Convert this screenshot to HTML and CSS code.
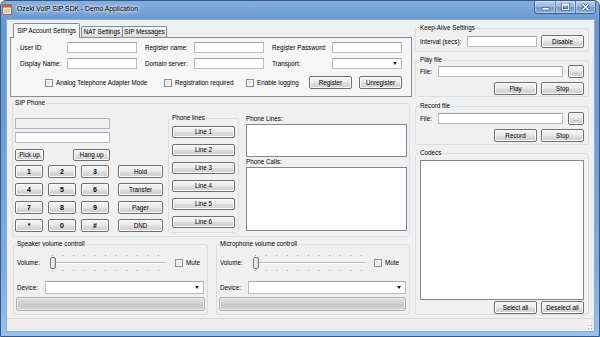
FILE: index.html
```html
<!DOCTYPE html>
<html lang="en">
<head>
  <meta charset="UTF-8" />
  <meta name="viewport" content="width=device-width, initial-scale=1.0"/>
  <title>Ozeki VoIP SIP SDK - Demo Application</title>
  <link rel="stylesheet" href="styles.css">
</head>

<body>
  <div class="window">
    <!-- Title bar -->
    <div class="titlebar">
      <svg class="app-icon" width="10" height="11" viewBox="0 0 10 11">
        <rect x="0.5" y="0.5" width="9" height="10" fill="#efe6d2" stroke="#8b7b5e"/>
        <rect x="1" y="1" width="8" height="2.5" fill="#c95b3c"/>
        <rect x="2" y="5" width="6" height="4" fill="#d9cdb2"/>
      </svg>
      <span class="title">Ozeki VoIP SIP SDK - Demo Application</span>
      <div class="caption-buttons">
        <span class="cap">
          <svg width="9" height="8" viewBox="0 0 9 8"><rect x="1" y="4.5" width="7" height="2.5" fill="#fff" stroke="#2c4a70" stroke-width="0.6"/></svg>
        </span>
        <span class="cap">
          <svg width="9" height="8" viewBox="0 0 9 8"><rect x="1.3" y="1" width="6.4" height="5.6" fill="none" stroke="#2c4a70" stroke-width="2.2"/><rect x="1.3" y="1" width="6.4" height="5.6" fill="none" stroke="#fff" stroke-width="1.1"/><rect x="1.3" y="0.8" width="6.4" height="1.6" fill="#fff"/></svg>
        </span>
        <span class="cap close">
          <svg width="9" height="8" viewBox="0 0 9 8"><path d="M1.5 1 L7.5 7 M7.5 1 L1.5 7" stroke="#2c4a70" stroke-width="2.6"/><path d="M1.5 1 L7.5 7 M7.5 1 L1.5 7" stroke="#fff" stroke-width="1.5"/></svg>
        </span>
      </div>
    </div>

    <div class="client">
      <div class="main">
        <div class="left-col">
          <!-- Account tabs -->
          <div class="tabs">
            <span class="tab active">SIP Account Settings</span>
            <span class="tab tab-nat">NAT Settings</span>
            <span class="tab tab-msg">SIP Messages</span>
          </div>
          <div class="tab-panel">
            <div class="account-grid">
              <label>User ID:</label>
              <input type="text" class="text">
              <label class="pad">Register name:</label>
              <input type="text" class="text">
              <label class="pad">Register Password:</label>
              <input type="text" class="text">

              <label>Display Name:</label>
              <input type="text" class="text">
              <label class="pad">Domain server:</label>
              <input type="text" class="text">
              <label class="pad">Transport:</label>
              <div class="combo"><span class="arrow"></span></div>
            </div>
            <div class="account-options">
              <label class="check-item w-analog"><input type="checkbox" class="check">Analog Telephone Adapter Mode</label>
              <label class="check-item w-reg"><input type="checkbox" class="check">Registration required</label>
              <label class="check-item w-log"><input type="checkbox" class="check">Enable logging</label>
              <button class="btn w43">Register</button>
              <button class="btn w43">Unregister</button>
            </div>
          </div>

          <!-- SIP Phone -->
          <fieldset class="group phone">
            <legend>SIP Phone</legend>
            <div class="phone-body">
              <div class="dialer">
                <div class="display"></div>
                <input type="text" class="text dial-input">
                <div class="call-row">
                  <button class="btn pick">Pick up</button>
                  <button class="btn hang">Hang up</button>
                </div>
                <div class="pad-row">
                  <div class="keypad">
                    <button class="btn key">1</button>
                    <button class="btn key">2</button>
                    <button class="btn key">3</button>
                    <button class="btn key">4</button>
                    <button class="btn key">5</button>
                    <button class="btn key">6</button>
                    <button class="btn key">7</button>
                    <button class="btn key">8</button>
                    <button class="btn key">9</button>
                    <button class="btn key">*</button>
                    <button class="btn key">0</button>
                    <button class="btn key">#</button>
                  </div>
                  <div class="func-keys">
                    <button class="btn">Hold</button>
                    <button class="btn">Transfer</button>
                    <button class="btn">Pager</button>
                    <button class="btn">DND</button>
                  </div>
                </div>
              </div>

              <fieldset class="group lines">
                <legend>Phone lines</legend>
                <button class="btn">Line 1</button>
                <button class="btn">Line 2</button>
                <button class="btn">Line 3</button>
                <button class="btn">Line 4</button>
                <button class="btn">Line 5</button>
                <button class="btn">Line 6</button>
              </fieldset>

              <div class="calls">
                <div class="caption">Phone Lines:</div>
                <div class="listbox lines-list"></div>
                <div class="caption">Phone Calls:</div>
                <div class="listbox calls-list"></div>
              </div>
            </div>
          </fieldset>

          <!-- Volume controls -->
          <div class="volume-row">
            <fieldset class="group volume speaker">
              <legend>Speaker volume controll</legend>
              <div class="vol-line">
                <span class="vol-label">Volume:</span>
                <div class="slider"><span class="thumb"></span></div>
                <label class="mute"><input type="checkbox" class="check">Mute</label>
              </div>
              <div class="dev-line">
                <span class="vol-label">Device:</span>
                <div class="combo"><span class="arrow"></span></div>
              </div>
              <div class="progress"></div>
            </fieldset>
            <fieldset class="group volume mic">
              <legend>Microphone volume controll</legend>
              <div class="vol-line">
                <span class="vol-label">Volume:</span>
                <div class="slider"><span class="thumb"></span></div>
                <label class="mute"><input type="checkbox" class="check">Mute</label>
              </div>
              <div class="dev-line">
                <span class="vol-label">Device:</span>
                <div class="combo"><span class="arrow"></span></div>
              </div>
              <div class="progress"></div>
            </fieldset>
          </div>
        </div>

        <div class="right-col">
          <fieldset class="group keepalive">
            <legend>Keep-Alive Settings</legend>
            <div class="row">
              <span class="lbl-interval">Interval (secs):</span>
              <input type="text" class="text w70">
              <button class="btn w43">Disable</button>
            </div>
          </fieldset>

          <fieldset class="group play">
            <legend>Play file</legend>
            <div class="row file-row">
              <span class="lbl-file">File:</span>
              <input type="text" class="text file-input">
              <button class="btn browse">...</button>
            </div>
            <div class="row btn-row">
              <button class="btn w43">Play</button>
              <button class="btn w43">Stop</button>
            </div>
          </fieldset>

          <fieldset class="group record">
            <legend>Record file</legend>
            <div class="row file-row">
              <span class="lbl-file">File:</span>
              <input type="text" class="text file-input">
              <button class="btn browse">...</button>
            </div>
            <div class="row btn-row">
              <button class="btn w43">Record</button>
              <button class="btn w43">Stop</button>
            </div>
          </fieldset>

          <fieldset class="group codecs">
            <legend>Codecs</legend>
            <div class="listbox codec-list"></div>
            <div class="row btn-row">
              <button class="btn w43">Select all</button>
              <button class="btn w43">Deselect all</button>
            </div>
          </fieldset>
        </div>
      </div>

      <div class="statusbar"><span class="grip"></span></div>
    </div>
  </div>
</body>
</html>
```

FILE: styles.css
```css
* {
  margin: 0;
  padding: 0;
  box-sizing: border-box;
}

html, body {
  width: 600px;
  height: 337px;
  overflow: hidden;
  background: #fff;
  font-family: "Liberation Sans", Arial, sans-serif;
  font-size: 6.3px;
  color: #000;
}

/* Window frame */
.window {
  width: 600px;
  height: 337px;
  display: flex;
  flex-direction: column;
  border: 1px solid #34598a;
  border-radius: 6px 6px 0 0;
  background: linear-gradient(180deg, #86b0df 0%, #6896cf 6%, #6e9ed6 40%, #7eacdf 80%, #98c2ec 100%);
}

.titlebar {
  height: 19px;
  display: flex;
  align-items: flex-start;
}

.app-icon {
  margin: 3px 0 0 1px;
}

.title {
  margin: 3px 0 0 5px;
  font-size: 6.8px;
  line-height: 9px;
  color: #000;
  text-shadow: 0 0 3px #fff, 0 0 4px #fff, 0 0 5px #e9f2fb;
}

.caption-buttons {
  margin-left: auto;
  margin-right: 3px;
  display: flex;
  height: 13px;
  border: 1px solid #3b5f8e;
  border-top: none;
  border-radius: 0 0 4px 4px;
  overflow: hidden;
}

.cap {
  width: 20px;
  display: flex;
  align-items: center;
  justify-content: center;
  background: linear-gradient(180deg, #b9d1ec 0%, #96b6de 48%, #7699c8 52%, #8fb2dc 100%);
  border-left: 1px solid #5d80ad;
  box-shadow: inset 0 0 0 1px rgba(255, 255, 255, 0.35);
}

.cap:first-child {
  border-left: none;
}

.client {
  flex: 1;
  margin: 0 5px 5px 6px;
  background: #f0f0f0;
  box-shadow: 0 0 0 1px #8fadd4;
  display: flex;
  flex-direction: column;
}

.main {
  flex: 1;
  display: flex;
  gap: 3px;
  padding: 3px 5px 3px 3px;
}

.left-col {
  width: 402px;
  display: flex;
  flex-direction: column;
}

.right-col {
  width: 174px;
  display: flex;
  flex-direction: column;
}

/* Common controls */
label, .caption, .vol-label, .lbl-interval, .lbl-file {
  line-height: 8px;
  white-space: nowrap;
}

.text {
  height: 11px;
  border: 1px solid #b7bcc4;
  border-top-color: #a2a6ae;
  background: #fff;
  font: inherit;
  outline: none;
}

.btn {
  height: 13px;
  border: 1px solid #707070;
  border-radius: 2px;
  background: linear-gradient(180deg, #f3f3f3 0%, #ebebeb 48%, #dddddd 52%, #cfcfcf 100%);
  box-shadow: inset 0 0 0 1px #fbfbfb;
  font: inherit;
  color: #000;
  line-height: 10px;
  text-align: center;
  white-space: nowrap;
}

.w43 {
  width: 43px;
}

.w70 {
  width: 70px;
}

.check {
  appearance: none;
  width: 8px;
  height: 8px;
  border: 1px solid #8e8f8f;
  background: linear-gradient(135deg, #d9d9d9, #fafafa);
  box-shadow: inset 0 0 0 1px #f4f4f4;
  flex-shrink: 0;
}

.combo {
  height: 12px;
  border: 1px solid #b7bcc4;
  border-top-color: #a2a6ae;
  background: #fff;
  display: flex;
  align-items: center;
  justify-content: flex-end;
  padding-right: 4px;
}

.arrow {
  width: 0;
  height: 0;
  border-left: 2.5px solid transparent;
  border-right: 2.5px solid transparent;
  border-top: 3px solid #111;
}

.listbox {
  border: 1px solid #828790;
  background: #fff;
}

/* Group boxes */
.group {
  border: 1px solid #d5dfe5;
  border-radius: 3px;
  min-width: 0;
}

.group legend {
  line-height: 8px;
  padding: 0 1px;
  margin-left: -1px;
  white-space: nowrap;
}

/* Tabs */
.tabs {
  height: 15px;
  display: flex;
  align-items: flex-end;
  padding-left: 3px;
}

.tab {
  height: 11px;
  margin-bottom: 1px;
  border: 1px solid #898c95;
  border-bottom: none;
  border-radius: 2px 2px 0 0;
  background: linear-gradient(180deg, #f4f4f4, #dcdcdc);
  text-align: center;
  line-height: 10px;
  white-space: nowrap;
}

.tab.active {
  width: 67px;
  height: 15px;
  margin-bottom: 0;
  background: #f6f6f6;
  position: relative;
  z-index: 1;
  line-height: 13px;
}

.tab-nat {
  width: 42px;
  margin-left: 1px;
}

.tab-msg {
  width: 45px;
  margin-left: -1px;
}

.tab-panel {
  height: 60px;
  margin-top: -1px;
  border: 1px solid #898c95;
  background: #f6f6f6;
  padding: 4px 0 0 9px;
}

.account-grid {
  display: grid;
  grid-template-columns: 47px 70px 57px 70px 68px 70px;
  grid-auto-rows: 11px;
  row-gap: 5px;
  align-items: center;
}

.account-grid .pad {
  padding-left: 8px;
}

.account-grid .combo {
  height: 11px;
}

.account-options {
  display: flex;
  align-items: center;
  margin: 7px 0 0 25px;
}

.check-item {
  display: flex;
  align-items: center;
  gap: 3px;
}

.w-analog {
  width: 119px;
}

.w-reg {
  width: 82px;
}

.w-log {
  width: 63px;
}

.account-options .btn + .btn {
  margin-left: 7px;
}

/* SIP Phone */
.phone {
  height: 138px;
  margin: 2px 2px 0 2px;
  padding: 0 2px 3px 2px;
}

.phone-body {
  display: flex;
  align-items: flex-start;
}

.dialer {
  width: 149px;
  margin-top: 11px;
  display: flex;
  flex-direction: column;
}

.display {
  width: 95px;
  height: 11px;
  border: 1px solid #b1b5bc;
  background: #f0f0f0;
}

.dial-input {
  width: 95px;
  margin-top: 3px;
}

.call-row {
  width: 95px;
  margin-top: 6px;
  display: flex;
  justify-content: space-between;
}

.call-row .btn {
  height: 12px;
}

.pick {
  width: 29px;
}

.hang {
  width: 37px;
}

.pad-row {
  margin-top: 4px;
  display: flex;
}

.keypad {
  display: grid;
  grid-template-columns: repeat(3, 28px);
  grid-auto-rows: 13px;
  gap: 5px 5px;
}

.key {
  font-weight: bold;
  font-size: 7px;
}

.func-keys {
  margin-left: 9px;
  display: flex;
  flex-direction: column;
  gap: 5px;
}

.func-keys .btn {
  width: 45px;
}

.lines {
  width: 71px;
  margin: 7px 0 0 4px;
  padding: 0 3px 4px 3px;
  display: flex;
  flex-direction: column;
  gap: 6px;
}

.lines legend + .btn {
  margin-top: 4px;
}

.lines .btn {
  width: 63px;
  height: 12px;
}

.calls {
  flex: 1;
  margin: 8px 0 0 7px;
  display: flex;
  flex-direction: column;
}

.lines-list {
  height: 33px;
  margin-top: 1px;
}

.calls .caption + .calls-list {
  margin-top: 1px;
}

.lines-list + .caption {
  margin-top: 1px;
}

.calls-list {
  height: 64px;
}

/* Volume groups */
.volume-row {
  margin-top: 3px;
  display: flex;
}

.volume {
  height: 75px;
  padding: 0 3px 3px 3px;
}

.speaker {
  width: 195px;
  margin-left: 3px;
}

.mic {
  width: 194px;
  margin-left: 8px;
}

.vol-line {
  margin-top: 6px;
  height: 18px;
  display: flex;
  align-items: center;
}

.vol-label {
  width: 33px;
}

.slider {
  height: 18px;
  display: flex;
  align-items: center;
  background:
    linear-gradient(90deg, #a8a8a8 1px, transparent 1px) 2px 1px / 10.6px 1px repeat-x,
    linear-gradient(90deg, #a8a8a8 1px, transparent 1px) 2px 16px / 10.6px 1px repeat-x,
    linear-gradient(#bdbdbd, #bdbdbd) 0 8px / 100% 1px no-repeat,
    linear-gradient(#ffffff, #ffffff) 0 9px / 100% 1px no-repeat;
}

.speaker .slider {
  width: 116px;
}

.mic .slider {
  width: 113px;
}

.thumb {
  width: 6px;
  height: 12px;
  border: 1px solid #7a7a7a;
  border-radius: 2px;
  background: linear-gradient(90deg, #f5f5f5, #d8d8d8);
}

.mute {
  margin-left: 9px;
  display: flex;
  align-items: center;
  gap: 3px;
}

.mic .mute {
  margin-left: 8px;
}

.dev-line {
  margin-top: 9px;
  display: flex;
  align-items: center;
}

.dev-line .vol-label {
  width: 28px;
}

.dev-line .combo {
  width: 159px;
  height: 13px;
}

.progress {
  height: 14px;
  margin: 3px 0 0 -1px;
  border: 1px solid #b2b2b2;
  border-radius: 2px;
  background: linear-gradient(180deg, #e2e2e2, #cfcfcf 50%, #c8c8c8 51%, #d4d4d4);
  box-shadow: inset 0 0 0 1px #e9e9e9;
}

.speaker .progress {
  width: 189px;
}

.mic .progress {
  width: 187px;
}

/* Right column */
.right-col .group {
  padding: 0 4px 0 4px;
}

.row {
  height: 13px;
  display: flex;
  align-items: center;
}

.keepalive {
  margin-top: 1px;
  height: 28px;
}

.keepalive .row {
  margin-top: 3px;
}

.lbl-interval {
  width: 47px;
}

.keepalive .btn {
  margin-left: 4px;
}

.lbl-file {
  width: 18px;
}

.file-input {
  width: 125px;
}

.browse {
  width: 16px;
  margin-left: 5px;
  color: #777;
}

.btn-row {
  justify-content: flex-end;
  gap: 4px;
}

.play {
  margin-top: 4px;
  height: 41px;
}

.play .file-row {
  margin-top: 1px;
}

.play .btn-row,
.record .btn-row {
  margin-top: 4px;
}

.record {
  margin-top: 5px;
  height: 43px;
}

.record .file-row {
  margin-top: 2px;
}

.codecs {
  margin-top: 4px;
  height: 166px;
}

.codec-list {
  height: 140px;
  margin-top: 3px;
}

.codecs .btn-row {
  margin-top: 1px;
}

/* Status bar */
.statusbar {
  height: 13px;
  border-top: 1px solid #d9d9d9;
  background: #f0efee;
  display: flex;
  justify-content: flex-end;
  align-items: flex-end;
}

.grip {
  width: 9px;
  height: 9px;
  margin: 0 1px 1px 0;
  background:
    radial-gradient(circle, #a9a9a9 0.8px, transparent 1px) 0 0 / 3px 3px;
  clip-path: polygon(100% 0, 100% 100%, 0 100%);
}
```
